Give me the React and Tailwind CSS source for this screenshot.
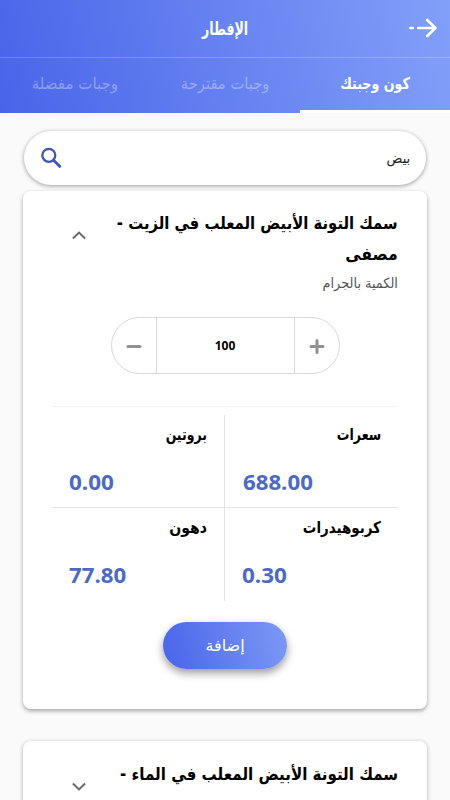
const tabs = [
  { label: 'كون وجبتك', style: 'text-white font-bold scale-x-[0.79] text-[16px]', active: true },
  { label: 'وجبات مقترحة', style: 'text-white/35 scale-x-[0.92] text-[16px]', active: false },
  { label: 'وجبات مفضلة', style: 'text-white/35 scale-x-[0.94] text-[16px]', active: false },
];

function Chevron({ open }) {
  return (
    <svg className="h-[9px] w-[14px] shrink-0" viewBox="0 0 14 9" fill="none" stroke="#6b6b6b" strokeWidth="2.1">
      <path d={open ? 'M.9 7.6 7 1.6l6.1 6' : 'M.9 1.4 7 7.4l6.1-6'} />
    </svg>
  );
}

function Nutrient({ label, value, className, labelStyle, valueStyle }) {
  return (
    <div className={`flex flex-col pt-[9px] ${className}`}>
      <div className="flex h-[22px] items-center">
        <span className={`inline-block origin-right whitespace-nowrap text-[16px] leading-none font-bold text-black ${labelStyle}`}>{label}</span>
      </div>
      <div dir="ltr" className="mt-[19px] flex h-8 items-center">
        <span className={`inline-block origin-left font-['Open_Sans',sans-serif] text-[22px] leading-none font-bold text-[#4c69c6] ${valueStyle}`}>{value}</span>
      </div>
    </div>
  );
}

export default function App() {
  return (
    <main dir="rtl" className="h-[800px] w-[450px] overflow-hidden bg-[#fafafa] font-['DejaVu_Sans',sans-serif]">
      <header className="h-[113px] bg-linear-[75deg] from-[#4964e9] to-[#82a0f9] text-white">
        <div className="grid h-[58px] grid-cols-[1fr_auto_1fr] items-center border-b border-white/20 px-[13px]">
          <svg className="mt-[-2px] h-5 w-7" viewBox="0 0 28 20" fill="none" stroke="white" strokeWidth="2.6" strokeLinecap="round" strokeLinejoin="round">
            <path d="M1.3 10h2.5M9.2 10H26M18.2 2l8.2 8-8.2 8" />
          </svg>
          <h1 className="scale-x-[0.7] text-[18px] leading-none font-bold">الإفطار</h1>
          <span />
        </div>
        <nav className="grid h-[55px] grid-cols-3">
          {tabs.map((tab) => (
            <div key={tab.label} className={`flex items-center justify-center border-b-3 ${tab.active ? 'border-white' : 'border-transparent'}`}>
              <span className={`inline-block whitespace-nowrap leading-none ${tab.style}`}>{tab.label}</span>
            </div>
          ))}
        </nav>
      </header>

      <div className="mx-6 mt-[18px] flex h-[54px] items-center justify-between rounded-full bg-white px-4 shadow-[0_1px_4px_rgba(0,0,0,0.38)]">
        <span className="inline-block origin-right scale-x-[0.94] text-[14px] text-[#222]">بيض</span>
        <svg className="size-[22px]" viewBox="0 0 22 22" fill="none" stroke="#3f56b5" strokeWidth="2.3">
          <circle cx="8.8" cy="8.3" r="6.5" />
          <path d="m13.4 13 7.2 7.2" strokeWidth="2.8" />
        </svg>
      </div>

      <section className="mx-[23px] mt-[6px] flex h-[518px] flex-col rounded-lg bg-white px-[29px] shadow-[0_2px_4px_rgba(0,0,0,0.35)]">
        <div className="flex h-[78px] justify-between pt-[17px] pl-5">
          <h2 className="origin-right scale-x-[0.873] whitespace-nowrap text-[17px] leading-[31px] font-bold text-black">
            سمك التونة الأبيض المعلب في الزيت -<br />
            <span className="inline-block origin-right scale-x-[1.06]">مصفى</span>
          </h2>
          <div className="-mr-10 pt-[23px]"><Chevron open /></div>
        </div>
        <p className="mt-[3px] h-[22px] text-[14px] leading-[22px] text-[#555]">
          <span className="inline-block origin-right scale-x-[0.92]">الكمية بالجرام</span>
        </p>
        <div className="mx-auto mt-[23px] grid h-[57px] w-[229px] grid-cols-[44px_1fr_44px] overflow-hidden rounded-full border border-[#d9d9d9]">
          <button className="flex items-center justify-center"><svg className="size-4" viewBox="0 0 16 16" stroke="#929292" strokeWidth="3" strokeLinecap="round"><path d="M2 8.5h12M8 2.5v12" /></svg></button>
          <div className="flex items-center justify-center border-x border-[#d9d9d9] font-['Open_Sans',sans-serif] text-[12px] font-bold text-black">100</div>
          <button className="flex items-center justify-center"><svg className="size-4" viewBox="0 0 16 16" stroke="#929292" strokeWidth="3" strokeLinecap="round"><path d="M2 8.5h12" /></svg></button>
        </div>
        <div className="mt-8 border-t border-[#f2f2f2] pt-2">
          <div className="grid grid-cols-2 grid-rows-[93px_93px]">
            <Nutrient label="سعرات" value="688.00" className="border-b border-[#e4e4e4] pr-[17px] pl-[18px]" labelStyle="scale-x-[0.79]" valueStyle="scale-x-[1.01]" />
            <Nutrient label="بروتين" value="0.00" className="border-r border-b border-[#e4e4e4] px-[17px]" labelStyle="scale-x-[0.78]" valueStyle="scale-x-[1.02]" />
            <Nutrient label="كربوهيدرات" value="0.30" className="px-[17px]" labelStyle="scale-x-[0.84]" valueStyle="scale-x-[1.02]" />
            <Nutrient label="دهون" value="77.80" className="border-r border-[#e4e4e4] px-[17px]" labelStyle="scale-x-[0.88]" valueStyle="scale-x-[1.01]" />
          </div>
        </div>
        <button className="mx-auto mt-[21px] flex h-[47px] w-[124px] items-center justify-center rounded-full bg-linear-[75deg] from-[#4964e9] to-[#7c99f7] text-[16px] text-white shadow-[0_4px_8px_rgba(0,0,0,0.4)]">
          <span className="inline-block leading-none">إضافة</span>
        </button>
      </section>

      <section className="mx-[23px] mt-8 flex h-[120px] justify-between rounded-lg bg-white pt-[18px] pr-[29px] pl-[49px] shadow-[0_1px_4px_rgba(0,0,0,0.3)]">
        <h2 className="origin-right scale-x-[0.888] whitespace-nowrap text-[17px] leading-[31px] font-bold text-black">سمك التونة الأبيض المعلب في الماء -</h2>
        <div className="-mr-10 pt-[23px]"><Chevron /></div>
      </section>
    </main>
  );
}
